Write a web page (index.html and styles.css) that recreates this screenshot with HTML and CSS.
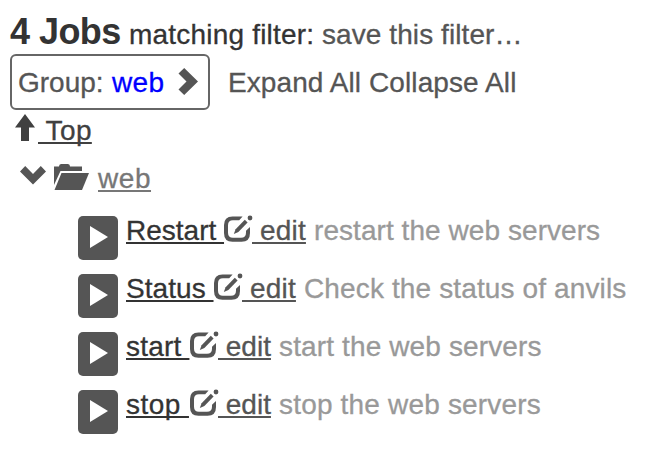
FILE: index.html
```html
<!DOCTYPE html>
<html lang="en">
<head>
<meta charset="utf-8">
<title>Jobs</title>
<link rel="stylesheet" href="styles.css">
</head>
<body>
<svg class="defs" aria-hidden="true">
  <symbol id="edit" viewBox="0 0 28 27" overflow="visible"><path d="M18.6.4L15.2 4.2H9Q4 4.2 4 9.2V16.8Q4 21.8 9 21.8H17Q22 21.8 22 16.8V14.8L26 11V17Q26 25.8 17.5 25.8H8.5Q0 25.8 0 17V9Q0 .4 8.5 .4Z"/><path d="M9.8 18L11.6 13.2 20.8 3.8 23.6 6.6 14.4 16Z"/><circle cx="26" cy="2" r="2.4"/></symbol>
</svg>
<main>
  <h1 class="heading"><strong>4 Jobs</strong><span class="matching">matching filter:</span><a class="save">save this filter…</a></h1>
  <div class="toolbar">
    <a class="group"><span class="label">Group:</span><span class="value">web</span><svg class="right" viewBox="0 0 19 28"><path d="M6.2 0L20 13.5 6.2 27 .5 21.5 8.5 13.5 .5 5.5Z"/></svg></a>
    <a class="expand">Expand All</a><a class="collapse">Collapse All</a>
  </div>
  <div class="top"><svg class="up" viewBox="0 0 20 27"><path d="M10 0L20 13.5H14V27H6V13.5H0Z"/></svg><a class="link toplink"> Top</a></div>
  <div class="folder"><svg class="down" viewBox="0 0 26 18"><path d="M0 5.5L5.2 0 13 8 20.8 0 26 5.5 13 18.5Z"/></svg><svg class="open" viewBox="0 0 35 26"><path d="M0 21V2.5H5Q5 0 7 0H14Q16 0 16 2.5H28V7H6.5Z"/><path d="M7.5 9H35L28 26H.5Z"/></svg><a class="link weblink">web</a></div>
  <ul class="jobs">
    <li><a class="run"><svg viewBox="0 0 18 22"><path d="M0 0L18 11 0 22Z"/></svg></a><a class="link name restart">Restart </a><svg class="edit"><use href="#edit"/></svg><a class="link editlink"> edit</a><span class="desc">restart the web servers</span></li>
    <li><a class="run"><svg viewBox="0 0 18 22"><path d="M0 0L18 11 0 22Z"/></svg></a><a class="link name status">Status </a><svg class="edit"><use href="#edit"/></svg><a class="link editlink"> edit</a><span class="desc">Check the status of anvils</span></li>
    <li><a class="run"><svg viewBox="0 0 18 22"><path d="M0 0L18 11 0 22Z"/></svg></a><a class="link name start">start </a><svg class="edit"><use href="#edit"/></svg><a class="link editlink"> edit</a><span class="desc">start the web servers</span></li>
    <li><a class="run"><svg viewBox="0 0 18 22"><path d="M0 0L18 11 0 22Z"/></svg></a><a class="link name stop">stop </a><svg class="edit"><use href="#edit"/></svg><a class="link editlink"> edit</a><span class="desc">stop the web servers</span></li>
  </ul>
</main>
</body>
</html>
```
FILE: styles.css
```css
* { box-sizing: border-box; }
body { margin: 0; background: #fff; color: #555; font: 28px/42px "Liberation Sans", Arial, sans-serif; -webkit-text-stroke: 0.3px; }
main { padding: 12px 0 0 10px; }
svg { display: block; flex: none; fill: currentColor; overflow: visible; }
.defs { position: absolute; width: 0; height: 0; }
.heading { display: flex; align-items: baseline; height: 42px; margin: 0; font-size: 28px; font-weight: 400; line-height: 40px; color: #333; white-space: nowrap; }
.heading strong { width: 119px; font-size: 36px; letter-spacing: -0.55px; -webkit-text-stroke: 0; }
.matching { width: 193px; letter-spacing: 0.2px; }
.save { color: #555; letter-spacing: 0.08px; }
.toolbar { display: flex; height: 56px; line-height: 58px; white-space: nowrap; }
.group { display: flex; width: 200px; height: 56px; border: 2px solid #666; border-radius: 6px; padding-left: 6px; line-height: 53px; margin-right: 18px; }
.label { width: 94px; }
.value { width: 66px; color: #00f; letter-spacing: 0.4px; }
.right { width: 19px; height: 28px; margin-top: 12px; }
.expand { width: 141px; letter-spacing: 0.08px; }
.collapse { letter-spacing: 0.1px; }
.top, .folder { display: flex; height: 48px; color: #404040; }
.up { width: 20px; height: 27px; margin: 4px 3px 0 5px; }
.link { white-space: pre; text-decoration: underline; text-decoration-thickness: 2px; text-underline-offset: 2px; text-decoration-skip-ink: none; }
.toplink { letter-spacing: 0.35px; }
.folder { color: #555; }
.down { width: 26px; height: 18px; margin: 8px 8px 0 10px; }
.open { width: 35px; height: 26px; margin: 6px 9px 0 0; }
.weblink { color: #777; letter-spacing: 0.55px; }
.jobs { list-style: none; margin: 4px 0 0 68px; padding: 0; }
.jobs li { display: flex; height: 58px; white-space: nowrap; }
.run { display: flex; width: 40px; height: 44px; margin: 6px 8px 0 0; padding: 10px 0 0 12px; border-radius: 5px; background: #555; color: #fff; flex: none; }
.run svg { width: 18px; height: 22px; }
.name { color: #333; letter-spacing: 0.05px; }
.restart { width: 98px; letter-spacing: 0; }
.status { width: 88px; }
.start { width: 64px; letter-spacing: 0.2px; }
.stop { width: 64px; letter-spacing: 0.45px; }
.edit { width: 28px; height: 27px; margin-top: 6px; }
.editlink { width: 55px; margin-right: 7px; letter-spacing: 0.2px; }
.start ~ .editlink, .stop ~ .editlink { width: 54px; letter-spacing: 0; }
.desc { color: #999; letter-spacing: 0.06px; }
.status ~ .desc { letter-spacing: 0.13px; }
.start ~ .desc { letter-spacing: 0.13px; }
.stop ~ .desc { letter-spacing: 0.18px; }
```
